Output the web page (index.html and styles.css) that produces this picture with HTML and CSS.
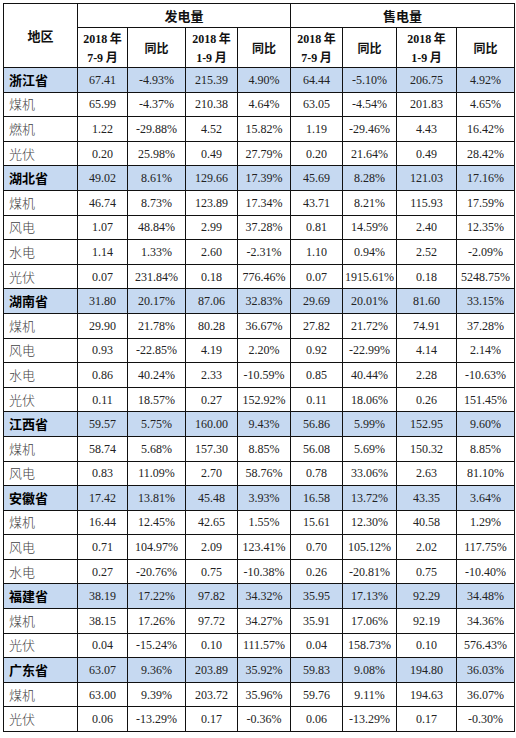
FILE: index.html
```html
<!DOCTYPE html>
<html lang="zh-CN">
<head>
	<meta charset="UTF-8">
	<title>发电量与售电量</title>
	<link rel="stylesheet" href="styles.css">
</head>
<body>
	<table class="power">
		<colgroup>
			<col class="c-area">
			<col class="c1"><col class="c2"><col class="c3"><col class="c4">
			<col class="c5"><col class="c6"><col class="c7"><col class="c8">
		</colgroup>
		<thead>
			<tr class="h1">
				<th rowspan="2" class="area-h">地区</th>
				<th colspan="4">发电量</th>
				<th colspan="4">售电量</th>
			</tr>
			<tr class="h2">
				<th><span class="num">2018</span> 年<br><span class="num">7-9</span> 月</th>
				<th>同比</th>
				<th><span class="num">2018</span> 年<br><span class="num">1-9</span> 月</th>
				<th>同比</th>
				<th><span class="num">2018</span> 年<br><span class="num">7-9</span> 月</th>
				<th>同比</th>
				<th><span class="num">2018</span> 年<br><span class="num">1-9</span> 月</th>
				<th>同比</th>
			</tr>
		</thead>
		<tbody>
			<tr class="prov"><td>浙江省</td><td>67.41</td><td>-4.93%</td><td>215.39</td><td>4.90%</td><td>64.44</td><td>-5.10%</td><td>206.75</td><td>4.92%</td></tr>
			<tr><td>煤机</td><td>65.99</td><td>-4.37%</td><td>210.38</td><td>4.64%</td><td>63.05</td><td>-4.54%</td><td>201.83</td><td>4.65%</td></tr>
			<tr><td>燃机</td><td>1.22</td><td>-29.88%</td><td>4.52</td><td>15.82%</td><td>1.19</td><td>-29.46%</td><td>4.43</td><td>16.42%</td></tr>
			<tr><td>光伏</td><td>0.20</td><td>25.98%</td><td>0.49</td><td>27.79%</td><td>0.20</td><td>21.64%</td><td>0.49</td><td>28.42%</td></tr>

			<tr class="prov"><td>湖北省</td><td>49.02</td><td>8.61%</td><td>129.66</td><td>17.39%</td><td>45.69</td><td>8.28%</td><td>121.03</td><td>17.16%</td></tr>
			<tr><td>煤机</td><td>46.74</td><td>8.73%</td><td>123.89</td><td>17.34%</td><td>43.71</td><td>8.21%</td><td>115.93</td><td>17.59%</td></tr>
			<tr><td>风电</td><td>1.07</td><td>48.84%</td><td>2.99</td><td>37.28%</td><td>0.81</td><td>14.59%</td><td>2.40</td><td>12.35%</td></tr>
			<tr><td>水电</td><td>1.14</td><td>1.33%</td><td>2.60</td><td>-2.31%</td><td>1.10</td><td>0.94%</td><td>2.52</td><td>-2.09%</td></tr>
			<tr><td>光伏</td><td>0.07</td><td>231.84%</td><td>0.18</td><td>776.46%</td><td>0.07</td><td>1915.61%</td><td>0.18</td><td>5248.75%</td></tr>

			<tr class="prov"><td>湖南省</td><td>31.80</td><td>20.17%</td><td>87.06</td><td>32.83%</td><td>29.69</td><td>20.01%</td><td>81.60</td><td>33.15%</td></tr>
			<tr><td>煤机</td><td>29.90</td><td>21.78%</td><td>80.28</td><td>36.67%</td><td>27.82</td><td>21.72%</td><td>74.91</td><td>37.28%</td></tr>
			<tr><td>风电</td><td>0.93</td><td>-22.85%</td><td>4.19</td><td>2.20%</td><td>0.92</td><td>-22.99%</td><td>4.14</td><td>2.14%</td></tr>
			<tr><td>水电</td><td>0.86</td><td>40.24%</td><td>2.33</td><td>-10.59%</td><td>0.85</td><td>40.44%</td><td>2.28</td><td>-10.63%</td></tr>
			<tr><td>光伏</td><td>0.11</td><td>18.57%</td><td>0.27</td><td>152.92%</td><td>0.11</td><td>18.06%</td><td>0.26</td><td>151.45%</td></tr>

			<tr class="prov"><td>江西省</td><td>59.57</td><td>5.75%</td><td>160.00</td><td>9.43%</td><td>56.86</td><td>5.99%</td><td>152.95</td><td>9.60%</td></tr>
			<tr><td>煤机</td><td>58.74</td><td>5.68%</td><td>157.30</td><td>8.85%</td><td>56.08</td><td>5.69%</td><td>150.32</td><td>8.85%</td></tr>
			<tr><td>风电</td><td>0.83</td><td>11.09%</td><td>2.70</td><td>58.76%</td><td>0.78</td><td>33.06%</td><td>2.63</td><td>81.10%</td></tr>

			<tr class="prov"><td>安徽省</td><td>17.42</td><td>13.81%</td><td>45.48</td><td>3.93%</td><td>16.58</td><td>13.72%</td><td>43.35</td><td>3.64%</td></tr>
			<tr><td>煤机</td><td>16.44</td><td>12.45%</td><td>42.65</td><td>1.55%</td><td>15.61</td><td>12.30%</td><td>40.58</td><td>1.29%</td></tr>
			<tr><td>风电</td><td>0.71</td><td>104.97%</td><td>2.09</td><td>123.41%</td><td>0.70</td><td>105.12%</td><td>2.02</td><td>117.75%</td></tr>
			<tr><td>水电</td><td>0.27</td><td>-20.76%</td><td>0.75</td><td>-10.38%</td><td>0.26</td><td>-20.81%</td><td>0.75</td><td>-10.40%</td></tr>

			<tr class="prov"><td>福建省</td><td>38.19</td><td>17.22%</td><td>97.82</td><td>34.32%</td><td>35.95</td><td>17.13%</td><td>92.29</td><td>34.48%</td></tr>
			<tr><td>煤机</td><td>38.15</td><td>17.26%</td><td>97.72</td><td>34.27%</td><td>35.91</td><td>17.06%</td><td>92.19</td><td>34.36%</td></tr>
			<tr><td>光伏</td><td>0.04</td><td>-15.24%</td><td>0.10</td><td>111.57%</td><td>0.04</td><td>158.73%</td><td>0.10</td><td>576.43%</td></tr>

			<tr class="prov"><td>广东省</td><td>63.07</td><td>9.36%</td><td>203.89</td><td>35.92%</td><td>59.83</td><td>9.08%</td><td>194.80</td><td>36.03%</td></tr>
			<tr><td>煤机</td><td>63.00</td><td>9.39%</td><td>203.72</td><td>35.96%</td><td>59.76</td><td>9.11%</td><td>194.63</td><td>36.07%</td></tr>
			<tr><td>光伏</td><td>0.06</td><td>-13.29%</td><td>0.17</td><td>-0.36%</td><td>0.06</td><td>-13.29%</td><td>0.17</td><td>-0.30%</td></tr>
		</tbody>
	</table>
</body>
</html>
```

FILE: styles.css
```css
*{
	margin: 0;
	padding: 0;
}
body{
	background: #fff;
	padding: 3px;
}
.power{
	width: 511px;
	table-layout: fixed;
	border-collapse: collapse;
	font-family: "Liberation Serif", "Noto Sans CJK SC", serif;
	font-size: 12px;
	color: #222;
}
.c-area{ width: 74px; }
.c1{ width: 50px; }
.c2{ width: 58px; }
.c3{ width: 52px; }
.c4{ width: 53px; }
.c5{ width: 52px; }
.c6{ width: 54px; }
.c7{ width: 60px; }
.c8{ width: 58px; }

.power th,.power td{
	border: 1px solid #111;
	text-align: center;
	vertical-align: middle;
	white-space: nowrap;
}
.power th{
	font-family: "Noto Sans CJK SC", sans-serif;
	font-weight: bold;
	font-size: 13px;
	color: #111;
}
.h1{
	height: 24px;
}
.h2{
	height: 40px;
}
.h2 th{
	font-size: 12px;
	line-height: 17px;
}
.num{
	font-family: "Liberation Serif", serif;
	font-weight: bold;
}
.power td{
	height: 23.6px;
	line-height: 14px;
}
.power td:first-child{
	text-align: left;
	padding-left: 5px;
	font-family: "Noto Sans CJK SC", sans-serif;
	font-weight: 300;
	font-size: 13px;
	color: #444;
}
.prov td{
	background: #c6d9f1;
}
.prov td:first-child{
	font-weight: bold;
	color: #000;
}
```
